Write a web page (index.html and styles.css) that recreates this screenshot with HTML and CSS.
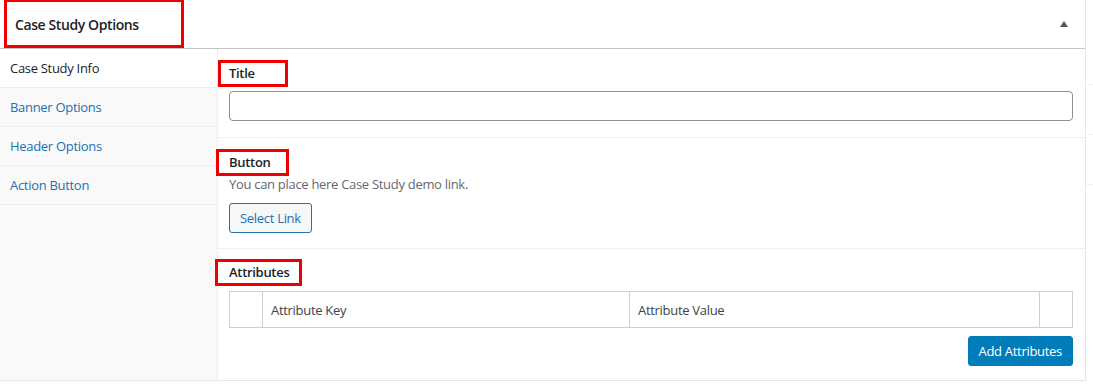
FILE: index.html
```html
<!DOCTYPE html>
<html lang="en">
<head>
    <meta charset="UTF-8">
    <meta name="viewport" content="width=device-width, initial-scale=1.0">
    <title>Case Study Options</title>
    <link rel="stylesheet" href="styles.css">
</head>
<body>
    <div class="page">
        <div class="postbox">
            <div class="postbox-header">
                <h2 class="hndle"><span class="mark mark-head">Case Study Options</span></h2>
                <span class="toggle-arrow"></span>
            </div>
            <div class="postbox-inside">
                <ul class="tabs">
                    <li class="tab active">Case Study Info</li>
                    <li class="tab">Banner Options</li>
                    <li class="tab">Header Options</li>
                    <li class="tab">Action Button</li>
                </ul>
                <div class="fields">
                    <div class="field field-first">
                        <label class="field-label"><span class="mark mark-title">Title</span></label>
                        <input type="text" class="text-input">
                    </div>
                    <div class="field">
                        <label class="field-label"><span class="mark mark-button">Button</span></label>
                        <p class="description">You can place here Case Study demo link.</p>
                        <button class="btn-secondary">Select Link</button>
                    </div>
                    <div class="field field-last">
                        <label class="field-label"><span class="mark mark-attr">Attributes</span></label>
                        <table class="attr-table">
                            <tr>
                                <td class="col-handle"></td>
                                <td class="col-key">Attribute Key</td>
                                <td class="col-value">Attribute Value</td>
                                <td class="col-remove"></td>
                            </tr>
                        </table>
                        <div class="actions">
                            <button class="btn-primary">Add Attributes</button>
                        </div>
                    </div>
                </div>
            </div>
        </div>
        <div class="side-strip">
            <div class="strip-row"></div>
            <div class="strip-row"></div>
            <div class="strip-row"></div>
        </div>
    </div>
</body>
</html>
```

FILE: styles.css
```css
body {
    margin: 0;
    background-color: #fff;
    font-family: "Open Sans", "Noto Sans", sans-serif;
    font-size: 13px;
    letter-spacing: -0.3px;
    color: #1d2327;
}

.page {
    display: flex;
    align-items: flex-start;
}

.postbox {
    width: 1085px;
    border-right: 1px solid #e5e5e5;
    border-bottom: 1px solid #e5e5e5;
    background-color: #fff;
}

.postbox-header {
    height: 48px;
    display: flex;
    align-items: center;
    justify-content: space-between;
    border-bottom: 1px solid #c3c4c7;
}

.hndle {
    margin: 0;
    padding-left: 15px;
    font-size: 14px;
    font-weight: 600;
    letter-spacing: -0.4px;
    color: #1d2327;
}

.toggle-arrow {
    width: 0;
    height: 0;
    margin-right: 17px;
    border-left: 4px solid transparent;
    border-right: 4px solid transparent;
    border-bottom: 6px solid #50575e;
}

.postbox-inside {
    display: flex;
}

.tabs {
    list-style: none;
    margin: 0;
    padding: 0;
    width: 217px;
    min-height: 331px;
    background-color: #f9f9f9;
    border-right: 1px solid #eee;
}

.tab {
    height: 38px;
    line-height: 38px;
    padding-left: 10px;
    border-bottom: 1px solid #eee;
    color: #2271b1;
}

.tab.active {
    background-color: #fff;
    color: #1d2327;
}

.fields {
    flex: 1;
}

.field {
    padding: 14px 12px 15px 11px;
    border-bottom: 1px solid #f0f0f1;
}

.field-first {
    padding-bottom: 16px;
}

.field-last {
    border-bottom: none;
    padding-top: 13px;
    padding-bottom: 13px;
}

.field-label {
    display: block;
    font-weight: 600;
    line-height: 20px;
    margin-bottom: 2px;
}

/* red annotation boxes drawn over the labels */
.mark {
    position: relative;
}

.mark::after {
    content: "";
    position: absolute;
    border: 3px solid #ee0000;
    top: -4px;
    bottom: -5px;
}

.mark-head::after {
    top: -16px;
    bottom: -14px;
    left: -11px;
    right: -45px;
}

.mark-title::after {
    left: -11px;
    right: -33px;
}

.mark-button::after {
    left: -13px;
    right: -18px;
}

.mark-attr::after {
    left: -14px;
    right: -13px;
}

.text-input {
    display: block;
    box-sizing: border-box;
    width: 100%;
    height: 30px;
    margin-top: 8px;
    border: 1px solid #8c8f94;
    border-radius: 4px;
}

.description {
    margin: 0 0 9px;
    color: #646970;
    line-height: 20px;
}

.btn-secondary {
    font-family: inherit;
    font-size: 13px;
    letter-spacing: inherit;
    height: 30px;
    padding: 0 10px;
    border: 1px solid #2271b1;
    border-radius: 3px;
    background-color: #f6f7f7;
    color: #2271b1;
}

.attr-table {
    width: 100%;
    border-collapse: collapse;
    margin-top: 9px;
}

.attr-table td {
    border: 1px solid #ccd0d4;
    height: 35px;
    padding: 0 8px;
    color: #3c434a;
}

.col-handle,
.col-remove {
    width: 16px;
}

.col-key {
    width: 350px;
}

.actions {
    display: flex;
    justify-content: flex-end;
    margin-top: 8px;
}

.btn-primary {
    font-family: inherit;
    font-size: 13px;
    letter-spacing: inherit;
    height: 30px;
    padding: 0 10px;
    border: 1px solid #007cba;
    border-radius: 3px;
    background-color: #007cba;
    color: #fff;
}

.side-strip {
    flex: 1;
    padding-top: 84px;
}

.strip-row {
    height: 49px;
    border-top: 1px solid #f0f0f1;
}
```
